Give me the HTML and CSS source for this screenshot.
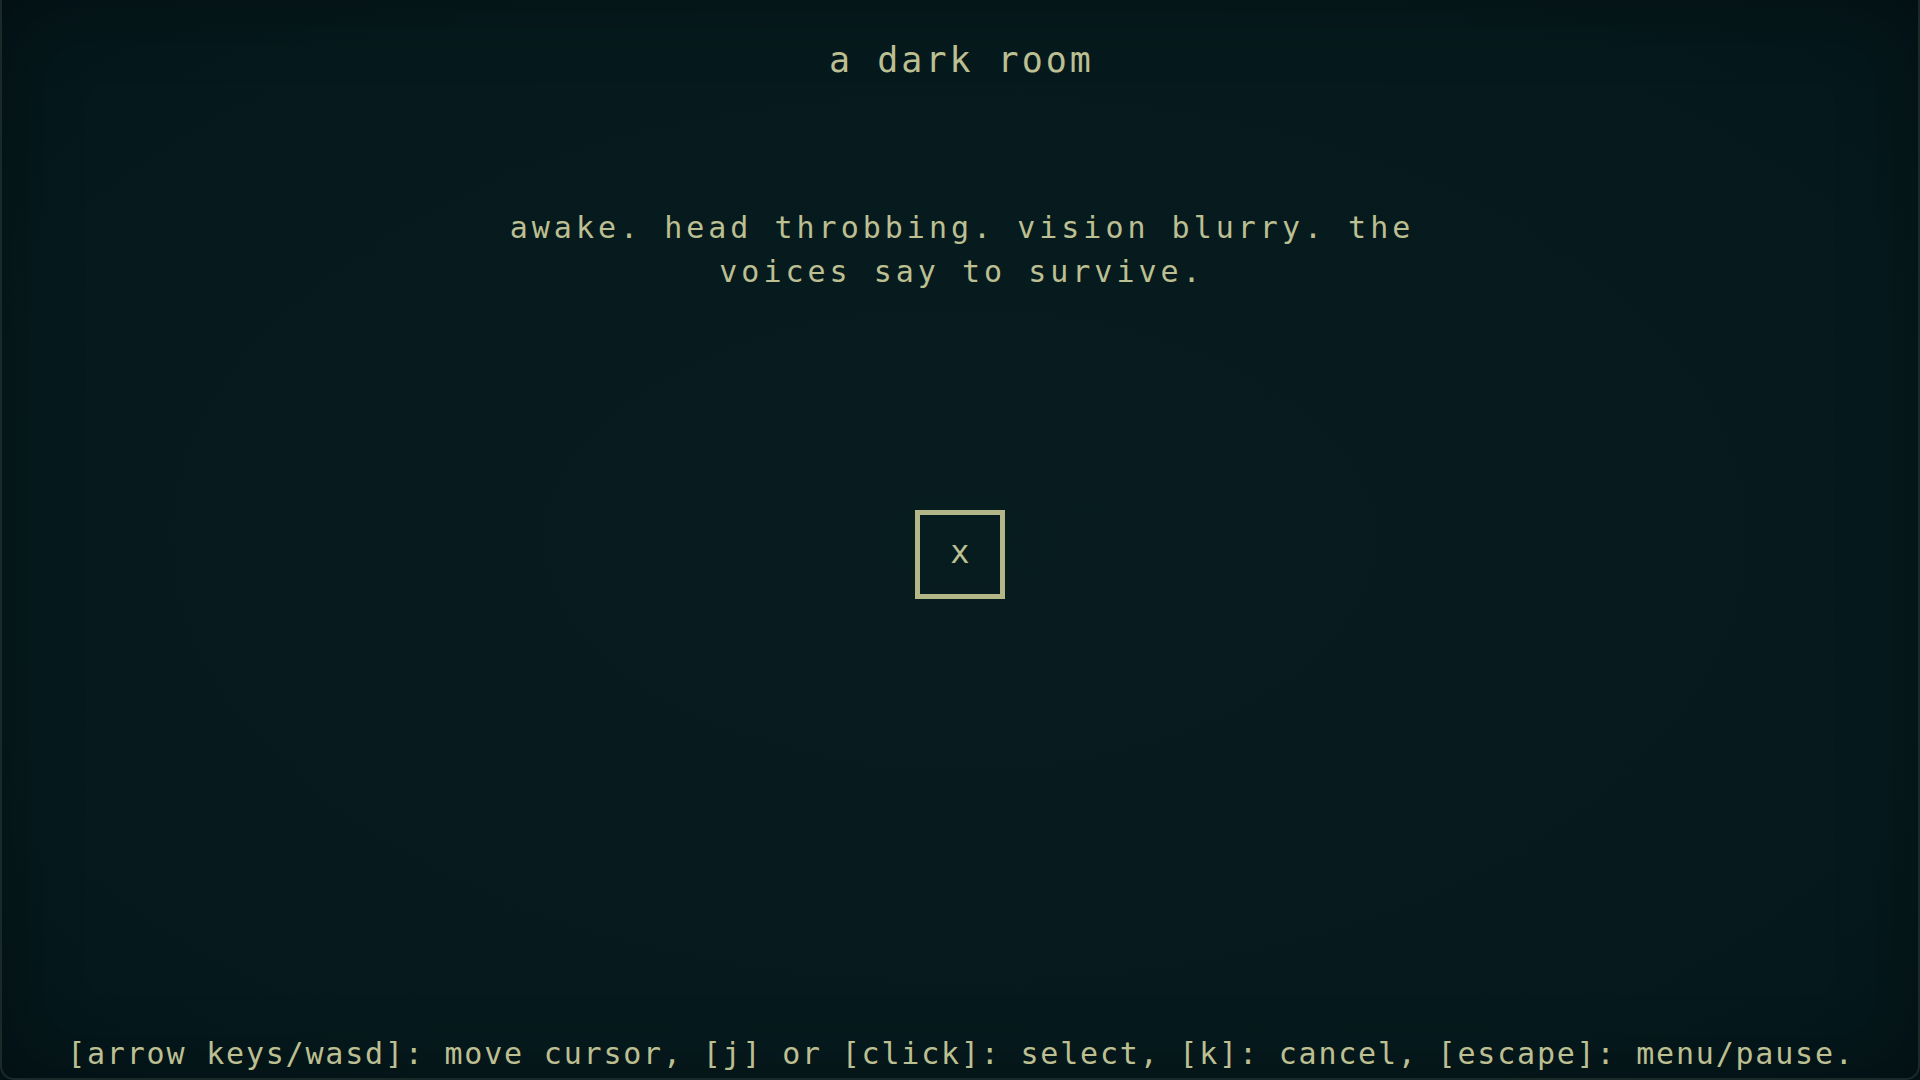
FILE: index.html
```html
<!DOCTYPE html>
<html lang="en">
<head>
<meta charset="utf-8">
<title>a dark room</title>
<link rel="stylesheet" href="styles.css">
</head>
<body>
<div class="screen">
  <h1 class="title">a dark room</h1>
  <p class="message">awake. head throbbing. vision blurry. the<br>voices say to survive.</p>
  <div class="cursor-box"><span class="cursor-mark">x</span></div>
  <p class="controls">[arrow keys/wasd]: move cursor, [j] or [click]: select, [k]: cancel, [escape]: menu/pause.</p>
</div>
</body>
</html>
```
FILE: styles.css
```css
html, body {
  margin: 0;
  padding: 0;
  background: #031314;
}

.screen {
  box-sizing: border-box;
  width: 1920px;
  height: 1080px;
  padding-top: 40px;
  display: flex;
  flex-direction: column;
  align-items: center;
  color: #bcbf91;
  font-family: "DejaVu Sans Mono", "Liberation Mono", monospace;
  background: radial-gradient(ellipse 75% 75% at 50% 50%, #071c1f 0%, #061a1d 70%, #04161a 92%, #031314 100%);
  border-left: 2px solid #1a2a2a;
  border-bottom: 2px solid #1a2a2a;
  border-right: 2px solid #1a2a2a;
  border-radius: 0 0 14px 14px;
  box-shadow: inset 0 0 70px 10px rgba(0, 0, 0, 0.25);
}

.title {
  margin: 0;
  font-size: 35px;
  font-weight: normal;
  line-height: 40px;
  letter-spacing: 3px;
  padding-left: 3px;
}

.message {
  margin: 126px 0 0 0;
  font-size: 30px;
  line-height: 44px;
  letter-spacing: 4px;
  padding-left: 4px;
  text-align: center;
}

.cursor-box {
  box-sizing: border-box;
  margin-top: 216px;
  width: 90px;
  height: 89px;
  border: 5px solid #b3b687;
  display: flex;
  align-items: center;
  justify-content: center;
}

.cursor-mark {
  font-size: 32px;
  line-height: 1;
  margin-top: -6px;
}

.controls {
  margin: auto 0 6px 0;
  font-size: 30px;
  line-height: 36px;
  letter-spacing: 1.8px;
  padding-left: 1.8px;
  white-space: nowrap;
}
```
